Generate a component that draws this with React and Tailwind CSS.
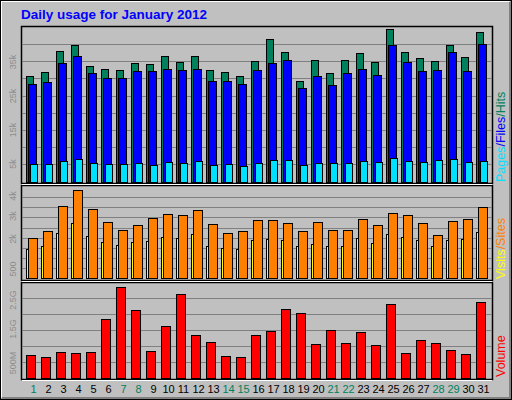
const hits=[75,71,50,44,65,68,69,62,63,55,61,55,69,71,75,60,38,51,80,59,72,59,52,61,28,51,57,60,44,56,31];
const files=[83,81,62,55,72,77,77,70,70,68,69,68,80,80,83,69,62,59,87,75,84,72,68,74,44,61,70,69,51,70,43];
const pages=[163,163,160,158,162,163,163,162,164,161,162,160,164,163,165,162,159,159,164,162,162,162,160,161,157,160,161,159,158,161,160];
const sites=[237,230,205,189,208,221,229,224,217,213,214,209,223,232,230,219,219,222,230,221,229,229,218,224,212,214,222,234,220,218,206];
const visits=[248,245,232,222,235,241,244,241,240,236,237,233,245,247,248,239,238,239,245,243,245,245,237,242,233,236,239,245,239,238,231];
const vol=[354,356,351,352,351,318,286,309,350,325,293,334,341,355,356,334,330,308,312,343,329,342,331,344,303,352,339,342,349,353,301];
const weekend=[1,7,8,14,15,21,22,28,29];
const F='"Liberation Sans", Arial, sans-serif';
const days=Array.from({length:31},(_,i)=>i);

function Frame({y0,y1,grid}){
  return (<>
    <rect x="20.5" y={y0+0.5} width="471" height={y1-y0-1} fill="#c0c0c0" stroke="#000" strokeWidth="1.5"/>
    <line x1="21" x2="491" y1={y1+0.5} y2={y1+0.5} stroke="#fff"/>
    {grid.map(g=><line key={g} x1="21" x2="491" y1={g+0.5} y2={g+0.5} stroke="#808080"/>)}
  </>);
}
function YL({x=15,y,t}){return <text x={x} y={y} transform={`rotate(-90 ${x} ${y})`} textAnchor="middle" fontSize="9" fill="#8c8c8c" fontFamily={F}>{t}</text>}
function R({x,top,base,w,fill}){return <rect x={x} y={top+0.5} width={w} height={base-top} fill={fill} stroke="#000" strokeWidth="1"/>}

export default function App(){
  return (
    <div className="w-[512px] h-[400px] border border-black bg-[#c0c0c0] overflow-hidden" style={{fontFamily:F}}>
      <div className="w-full h-full border-t border-l border-white border-r-2 border-b-2 border-r-[#808080] border-b-[#808080] flex flex-col">
        <div className="h-[23px] pl-[19px] pt-[5px] text-[13.5px] leading-[16px] font-bold text-[#0000ff]">Daily usage for January 2012</div>
        <svg width="512" height="160" viewBox="1 24 512 160" className="block shrink-0">
          <Frame y0={25} y1={183} grid={[43,60,77,95,112,129,146,163]}/>
          <YL y={61} t="35k"/><YL y={95} t="25k"/><YL y={129} t="15k"/><YL y={163} t="5k"/>
          {days.map(i=>{const b=25+15*i;return <g key={i}>
            <R x={b+0.5} top={hits[i]} base={181} w={7} fill="#00805c"/>
            <R x={b+2.5} top={files[i]} base={181} w={8} fill="#0000ff"/>
            <R x={b+4.5} top={pages[i]} base={181} w={7} fill="#00e0ff"/>
          </g>})}
          <text transform="translate(504 181) rotate(-90)" fontSize="12.5" fontFamily={F}><tspan fill="#00e0ff">Pages</tspan><tspan fill="#0000ff">/Files</tspan><tspan fill="#00805c">/Hits</tspan></text>
        </svg>
        <svg width="512" height="97" viewBox="1 184 512 97" className="block shrink-0">
          <Frame y0={184} y1={280} grid={[196,206,216,227,237,247,257,267]}/>
          <YL y={195} t="4k"/><YL y={215} t="3k"/><YL y={238} t="2k"/><YL y={268} t="500"/>
          {days.map(i=>{const b=25+15*i;return <g key={i}>
            <R x={b+0.5} top={visits[i]} base={277} w={7} fill="#ffff00"/>
            <R x={b+2.5} top={sites[i]} base={277} w={9} fill="#ff8000"/>
          </g>})}
          <text transform="translate(504 278) rotate(-90)" fontSize="12.5" fontFamily={F}><tspan fill="#ffff00">Visits</tspan><tspan fill="#ff8000">/Sites</tspan></text>
        </svg>
        <svg width="512" height="99" viewBox="1 281 512 99" className="block shrink-0">
          <Frame y0={281} y1={379} grid={[297,313,329,345,361]}/>
          <YL y={299} t="2.5G"/><YL y={328} t="1.5G"/><YL y={362} t="500M"/>
          {days.map(i=>{const b=25+15*i;return <R key={i} x={b+0.5} top={vol[i]} base={377} w={9} fill="#ff0000"/>})}
          <text transform="translate(504 376) rotate(-90)" fontSize="12.5" fill="#ff0000" fontFamily={F}>Volume</text>
        </svg>
        <div className="flex pl-[24px] pt-[1px] text-[11px] leading-[14px]">
          {days.map(i=><div key={i} className={`w-[15px] text-center ${weekend.includes(i+1)?'text-[#00805c]':'text-black'}`}>{i+1}</div>)}
        </div>
      </div>
    </div>
  );
}
